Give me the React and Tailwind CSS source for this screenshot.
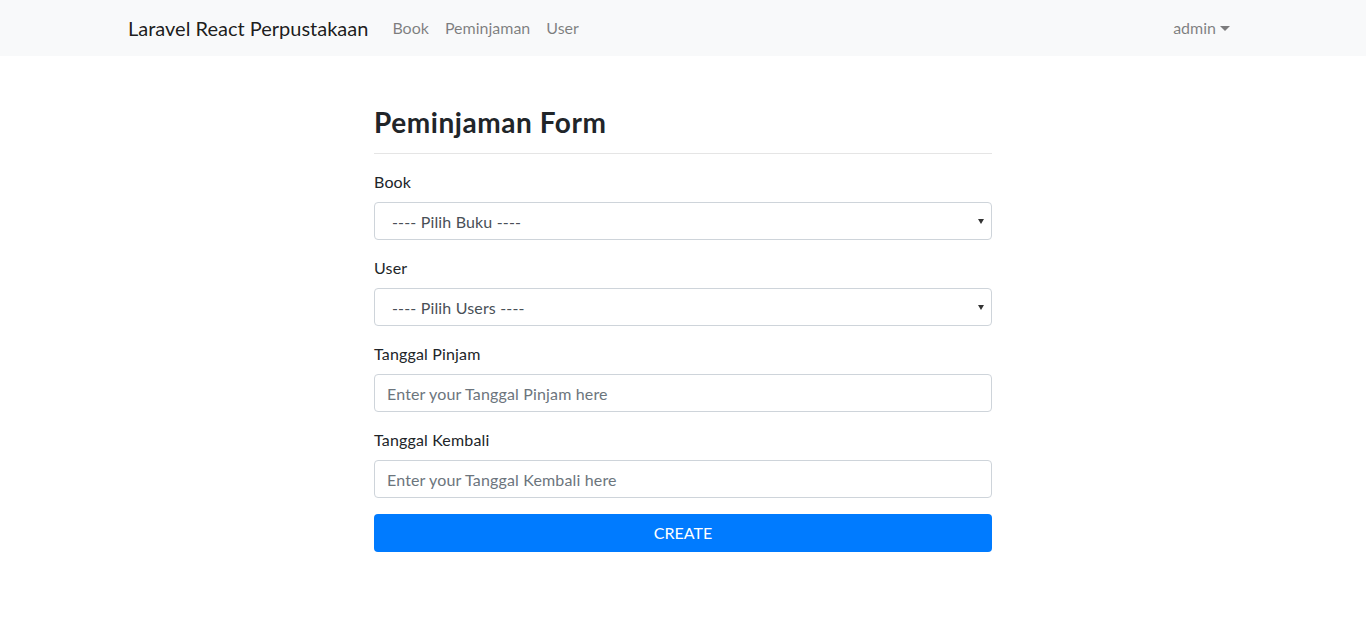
import React, { useState } from 'react';

const font = { fontFamily: 'Lato, "Open Sans", sans-serif' };

function Navbar() {
    return (
        <nav className="h-14 bg-[#f8f9fa] flex items-center">
            <div className="w-[1140px] mx-auto px-[15px] flex items-center">
                <a href="#" className="text-[20px] text-[rgba(0,0,0,0.9)] mr-4 leading-[30px]">Laravel React Perpustakaan</a>
                <ul className="flex items-center">
                    <li><a href="#" className="px-2 text-[16px] text-[rgba(0,0,0,0.5)]">Book</a></li>
                    <li><a href="#" className="px-2 text-[16px] text-[rgba(0,0,0,0.5)]">Peminjaman</a></li>
                    <li><a href="#" className="px-2 text-[16px] text-[rgba(0,0,0,0.5)]">User</a></li>
                </ul>
                <div className="ml-auto px-2 flex items-center text-[16px] text-[rgba(0,0,0,0.5)]">
                    admin
                    <span className="ml-[4px] w-0 h-0 border-l-[5px] border-r-[5px] border-t-[5px] border-l-transparent border-r-transparent border-t-[rgba(0,0,0,0.5)]"></span>
                </div>
            </div>
        </nav>
    );
}

function SelectField({ label, value, onChange, placeholder }) {
    return (
        <div className="mb-4">
            <label className="block mb-2 leading-6 text-[16px] text-[#212529] tracking-[0.01em]">{label}</label>
            <div className="relative">
                <select
                    value={value}
                    onChange={onChange}
                    className="appearance-none w-full h-[38px] pl-[17px] pr-8 pt-[1px] border border-[#ced4da] rounded-[4px] bg-white text-[16px] text-[#495057] tracking-[0.01em] outline-none"
                >
                    <option value="">{placeholder}</option>
                </select>
                <span className="absolute right-[8px] top-[17px] w-0 h-0 border-l-[3px] border-r-[3px] border-t-[5px] border-l-transparent border-r-transparent border-t-[#333]"></span>
            </div>
        </div>
    );
}

function InputField({ label, value, onChange, placeholder }) {
    return (
        <div className="mb-4">
            <label className="block mb-2 leading-6 text-[16px] text-[#212529] tracking-[0.01em]">{label}</label>
            <input
                type="text"
                value={value}
                onChange={onChange}
                placeholder={placeholder}
                className="w-full h-[38px] px-3 pt-[1px] border border-[#ced4da] rounded-[4px] bg-white text-[16px] text-[#495057] tracking-[0.01em] placeholder:text-[#6c757d] outline-none"
            />
        </div>
    );
}

export default function App() {
    const [book, setBook] = useState('');
    const [user, setUser] = useState('');
    const [tanggalPinjam, setTanggalPinjam] = useState('');
    const [tanggalKembali, setTanggalKembali] = useState('');

    return (
        <div className="min-h-screen bg-white" style={font}>
            <Navbar />
            <div className="w-[618px] mx-auto pt-[49px]">
                <h3 className="text-[28px] font-bold leading-[34px] tracking-[0.02em] text-[#212529]">Peminjaman Form</h3>
                <hr className="mt-[14px] mb-4 border-0 border-t border-[rgba(0,0,0,0.1)]" />
                <form onSubmit={(e) => e.preventDefault()}>
                    <SelectField label="Book" value={book} onChange={(e) => setBook(e.target.value)} placeholder="---- Pilih Buku ----" />
                    <SelectField label="User" value={user} onChange={(e) => setUser(e.target.value)} placeholder="---- Pilih Users ----" />
                    <InputField label="Tanggal Pinjam" value={tanggalPinjam} onChange={(e) => setTanggalPinjam(e.target.value)} placeholder="Enter your Tanggal Pinjam here" />
                    <InputField label="Tanggal Kembali" value={tanggalKembali} onChange={(e) => setTanggalKembali(e.target.value)} placeholder="Enter your Tanggal Kembali here" />
                    <button type="submit" className="w-full h-[38px] rounded-[4px] bg-[#007bff] text-white text-[16px]">
                        CREATE
                    </button>
                </form>
            </div>
        </div>
    );
}
